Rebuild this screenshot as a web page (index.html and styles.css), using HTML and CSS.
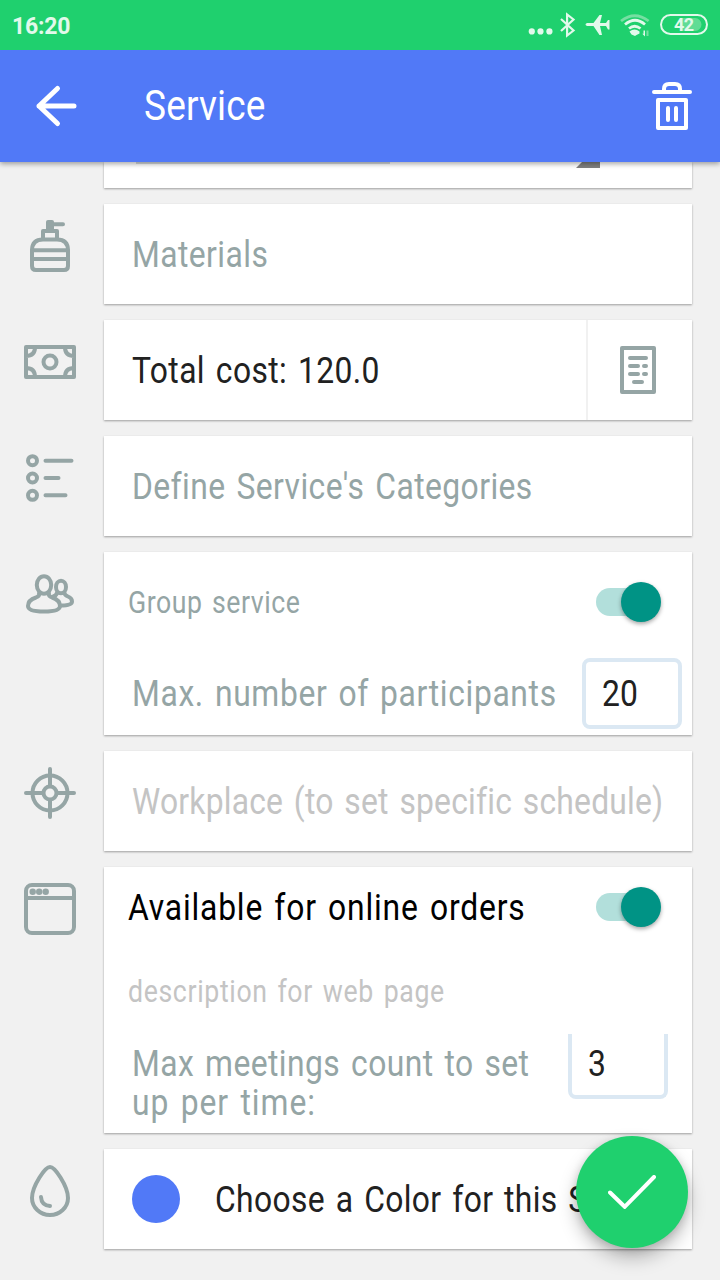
FILE: index.html
```html
<!DOCTYPE html>
<html lang="en">

<head>
    <meta charset="UTF-8" />
    <meta name="viewport" content="width=device-width, initial-scale=1.0" />
    <title>Service</title>
    <link rel="stylesheet" href="styles.css">
</head>

<body>
    <div class="status-bar">
        <span class="clock">16:20</span>
        <svg class="status-icons" width="182" height="30" viewBox="0 0 182 30">
            <g fill="#e2f9eb">
                <circle cx="3.8" cy="21.4" r="3.1" />
                <circle cx="12.5" cy="21.4" r="3.1" />
                <circle cx="21.4" cy="21.4" r="3.1" />
                <path d="M65.500 13L71.500 5H74L72 13H78L80 10H81.500V19.500H80L78 16H72L74 25H71.500L65.500 16H59Q56 14.500 59 13z" />
                <path d="M101.500 21.500q5-3.800 10 0v2l-3 1.500-1.500 1-3.500-1.500z" />
                <path d="M117 20.500v6l-2.700-2.700h1.200v-3.300z" />
            </g>
            <path d="M33 9l12.500 11.500-6.400 5V4.500l6.400 5L33 21" fill="none" stroke="#e2f9eb" stroke-width="2.200" />
            <path d="M101 18.500q5.600-4.500 11.500 0M97 14.500q10-8.500 20 0" fill="none" stroke="#e2f9eb" stroke-width="2.800" />
            <path d="M93 11q13.800-10.500 27.600 0" fill="none" stroke="#76dfa2" stroke-width="2.800" />
            <path d="M119.500 20.500v5.500" stroke="#76dfa2" stroke-width="2" />
            <path d="M152 8h15a6.500 6.500 0 0 1 0 13h-15z" fill="#61dc95" />
            <rect x="133" y="5" width="46" height="19" rx="9.500" fill="none" stroke="#e2f9eb" stroke-width="2" />
            <text class="battery" x="146" y="21">42</text>
        </svg>
    </div>

    <header class="app-bar">
        <svg class="back" width="44" height="44" viewBox="0 0 44 44">
            <path d="M40 22H5M23.500 4.500L5 22l18.500 17.500" fill="none" stroke="#fff" stroke-width="5" stroke-linecap="round" stroke-linejoin="round" />
        </svg>
        <h1 class="text title">Service</h1>
        <svg class="trash" width="40" height="48" viewBox="0 0 40 48">
            <g fill="none" stroke="#fff" stroke-width="4" stroke-linecap="round" stroke-linejoin="round">
                <path d="M2 10h36M12 10V7q0-5 5-5h6q5 0 5 5v3" />
                <path d="M6 18h28v28H6zM16 26v12M24 26v12" />
            </g>
        </svg>
    </header>

    <main class="list">
        <div class="row">
            <div class="side"></div>
            <div class="card card-cut">
                <div class="underline"></div>
                <div class="spinner"></div>
            </div>
        </div>

        <div class="row">
            <div class="side">
                <svg class="icon" viewBox="0 0 52 52">
                    <path d="M8 30.200h36M8 39h36M19 18v-7h14v7M28 4.300h11" />
                    <path d="M19 19.500h14q11 0 11 11V46q0 4-4 4H12q-4 0-4-4V30.500q0-11 11-11z" />
                    <path class="solid" d="M22 2q0-2 2-2h4q2 0 2 2v10h-8z" />
                </svg>
            </div>
            <div class="card line">
                <span class="text muted materials">Materials</span>
            </div>
        </div>

        <div class="row">
            <div class="side">
                <svg class="icon" viewBox="0 0 52 52">
                    <path d="M2 11h48v30H2zM11 11q0 9-9 9M41 11q0 9 9 9M2 32q9 0 9 9M50 32q-9 0-9 9" />
                    <circle cx="26" cy="26" r="6.500" />
                </svg>
            </div>
            <div class="card line">
                <span class="text total">Total cost: 120.0</span>
                <div class="receipt">
                    <svg width="36" height="48" viewBox="0 0 36 48">
                        <path d="M2 2h32v44H2zM10 12h16M10 20h8M24 20h2M10 28h8M24 28h2M14 36h8" />
                    </svg>
                </div>
            </div>
        </div>

        <div class="row">
            <div class="side">
                <svg class="icon" viewBox="0 0 52 52">
                    <circle cx="8.500" cy="8.700" r="4.500" />
                    <circle cx="8.500" cy="26" r="4.500" />
                    <circle cx="8.500" cy="43.300" r="4.500" />
                    <path d="M21.500 8.700h26M21.500 26h13M21.500 43.300h20" />
                </svg>
            </div>
            <div class="card line">
                <span class="text muted categories">Define Service's Categories</span>
            </div>
        </div>

        <div class="row">
            <div class="side">
                <svg class="icon" viewBox="0 0 52 52">
                    <ellipse cx="20" cy="17" rx="7.200" ry="8.700" />
                    <path d="M15 25.500q1 2.500-3 4Q4 32 4 38q0 5.500 16 5.500T36 38q0-6-8-8.500-4-1.500-3-4" />
                    <ellipse cx="37" cy="19" rx="5" ry="6.300" />
                    <path d="M33 25q-1 3-4 3.500M40.500 25q0 2 3.500 3.500 4 1.500 4 5Q48 37.500 36 37.500" />
                </svg>
            </div>
            <div class="card">
                <div class="group-row">
                    <span class="text small muted group">Group service</span>
                    <div class="toggle"></div>
                </div>
                <div class="count-row">
                    <span class="text muted participants">Max. number of participants</span>
                    <div class="field"><span class="text twenty">20</span></div>
                </div>
            </div>
        </div>

        <div class="row">
            <div class="side">
                <svg class="icon" viewBox="0 0 52 52">
                    <circle cx="26" cy="26" r="17.500" />
                    <circle cx="26" cy="26" r="6.500" />
                    <path d="M26 2v17M26 33v17M2 26h17M33 26h17" />
                </svg>
            </div>
            <div class="card line">
                <span class="text hint workplace">Workplace (to set specific schedule)</span>
            </div>
        </div>

        <div class="row">
            <div class="side">
                <svg class="icon" viewBox="0 0 52 52">
                    <rect x="2" y="2" width="48" height="48" rx="6" />
                    <path d="M2 15h48" />
                    <circle class="solid" cx="8.700" cy="8.700" r="3.200" />
                    <circle class="solid" cx="15.200" cy="8.700" r="3.200" />
                    <circle class="solid" cx="21.700" cy="8.700" r="3.200" />
                </svg>
            </div>
            <div class="card">
                <div class="online-row">
                    <span class="text strong online">Available for online orders</span>
                    <div class="toggle"></div>
                </div>
                <div class="desc-row">
                    <span class="text small hint description">description for web page</span>
                </div>
                <div class="meetings-row">
                    <div class="meetings muted">
                        <span class="text meetings-first">Max meetings count to set</span>
                        <span class="text meetings-second">up per time:</span>
                    </div>
                    <div class="field field-cut"><span class="text">3</span></div>
                </div>
            </div>
        </div>

        <div class="row">
            <div class="side">
                <svg class="icon" viewBox="0 0 52 52">
                    <path d="M26 2q4 0 10.500 10.500Q44 24.500 44 33q0 7-5.300 12T26 50t-12.700-5T8 33q0-8.500 7.500-20.500Q22 2 26 2z" />
                    <path d="M17 32q.5 8.500 9 9" />
                </svg>
            </div>
            <div class="card line">
                <div class="swatch"></div>
                <span class="text choose">Choose a Color for this Service</span>
            </div>
        </div>
    </main>

    <div class="fab">
        <svg width="48" height="34" viewBox="0 0 48 34">
            <path d="M2 17.500l14.700 14.300L46 2" fill="none" stroke="#fff" stroke-width="4" stroke-linecap="round" />
        </svg>
    </div>
</body>

</html>
```
FILE: styles.css
```css
* {
    box-sizing: border-box;
}

body {
    position: relative;
    width: 720px;
    height: 1280px;
    margin: 0;
    overflow: hidden;
    background-color: #f1f1f1;
    color: #212121;
    font-family: Roboto, "Noto Sans", sans-serif;
}

svg {
    display: block;
    flex: none;
}

.status-bar {
    position: relative;
    z-index: 2;
    display: flex;
    justify-content: space-between;
    height: 50px;
    padding: 10px 10px 0 12px;
    background-color: #1fd06e;
}

.clock {
    color: #e2f9eb;
    font-size: 23px;
    font-weight: 700;
    line-height: 34px;
    letter-spacing: -0.2px;
}

.battery {
    fill: #e2f9eb;
    font-size: 18px;
    font-weight: 700;
    letter-spacing: -0.5px;
}

.app-bar {
    position: relative;
    z-index: 1;
    display: flex;
    align-items: center;
    height: 112px;
    padding: 0 28px 0 34px;
    background-color: #5179f7;
    box-shadow: 0 2px 5px rgba(0, 0, 0, 0.35);
}

.trash {
    margin-left: auto;
}

/* condensed lettering */
.text {
    display: block;
    flex: none;
    font-size: 37px;
    font-weight: 400;
    white-space: nowrap;
    word-spacing: 3px;
    transform: scaleX(0.86);
    transform-origin: left center;
}

.small {
    font-size: 31px;
}

.muted {
    color: #95a5a5;
}

.hint {
    color: #c4c4c4;
}

.strong {
    color: #000;
}

.title {
    margin: 0 0 0 66px;
    padding-bottom: 2px;
    color: #fff;
    font-size: 43px;
    letter-spacing: 0.2px;
}

.materials {
    letter-spacing: 0.5px;
}

.categories {
    letter-spacing: 0.5px;
}

.group {
    letter-spacing: 0.6px;
}

.workplace {
    letter-spacing: 0.25px;
}

.online {
    letter-spacing: 0.95px;
}

.description {
    letter-spacing: 0.75px;
}

.meetings-first {
    letter-spacing: 0.5px;
}

.meetings-second {
    letter-spacing: 1.1px;
}

.choose {
    letter-spacing: 0.4px;
}

.list {
    display: flex;
    flex-direction: column;
    gap: 16px;
}

.row {
    display: flex;
}

.side {
    width: 104px;
    padding: 16px 0 0 24px;
}

.icon {
    width: 52px;
    height: 52px;
    overflow: visible;
}

.icon,
.receipt svg {
    fill: none;
    stroke: #95a5a5;
    stroke-width: 4;
    stroke-linecap: round;
    stroke-linejoin: round;
}

.icon .solid {
    fill: #95a5a5;
    stroke: none;
}

.card {
    width: 588px;
    background-color: #fff;
    box-shadow: 0 1px 2px rgba(0, 0, 0, 0.35);
}

.line {
    display: flex;
    align-items: center;
    height: 100px;
    padding-left: 28px;
}

.card-cut {
    display: flex;
    align-items: flex-start;
    height: 26px;
    padding-left: 32px;
}

.underline {
    width: 254px;
    height: 2px;
    background-color: #d5dade;
}

.spinner {
    width: 24px;
    height: 6px;
    margin-left: 186px;
    background-color: #808080;
    clip-path: polygon(6px 0, 100% 0, 100% 100%, 0 100%);
}

.receipt {
    display: flex;
    align-items: center;
    justify-content: center;
    width: 106px;
    height: 100px;
    margin-left: auto;
    padding-right: 4px;
    border-left: 2px solid #f1f1f1;
}

.total {
    width: 250px;
    letter-spacing: 0.45px;
}

.group-row,
.online-row {
    display: flex;
    align-items: center;
    justify-content: space-between;
    height: 100px;
    padding: 0 31px 0 24px;
}

.online-row {
    height: 80px;
}

.toggle {
    display: flex;
    align-items: center;
    justify-content: flex-end;
    width: 65px;
    height: 28px;
    border-radius: 14px;
    background: linear-gradient(to right, #b2dfdb 56px, transparent 56px);
}

.toggle::after {
    content: "";
    width: 40px;
    height: 40px;
    flex: none;
    border-radius: 50%;
    background-color: #009385;
    box-shadow: 0 2px 4px rgba(0, 0, 0, 0.35);
}

.count-row {
    display: flex;
    align-items: center;
    justify-content: space-between;
    height: 83px;
    padding: 0 10px 0 28px;
}

.participants {
    width: 440px;
    letter-spacing: 0.75px;
}

.field {
    display: flex;
    align-items: center;
    flex: none;
    width: 100px;
    height: 71px;
    padding: 0 0 1px 16px;
    border: 4px solid #dbe8f3;
    border-radius: 8px;
}

.desc-row {
    display: flex;
    align-items: center;
    height: 87px;
    padding: 1px 0 0 24px;
}

.meetings-row {
    display: flex;
    justify-content: space-between;
    height: 99px;
    padding: 0 24px 0 28px;
}

.meetings {
    width: 410px;
    padding-top: 11px;
    line-height: 38.5px;
}

.field-cut {
    height: 65px;
    padding-bottom: 2px;
    border-top: 0;
    border-radius: 0 0 8px 8px;
}

.swatch {
    flex: none;
    width: 48px;
    height: 48px;
    margin-right: 35px;
    border-radius: 50%;
    background-color: #5179f7;
}

.fab {
    position: absolute;
    top: 1136px;
    left: 576px;
    display: flex;
    align-items: center;
    justify-content: center;
    width: 112px;
    height: 112px;
    border-radius: 50%;
    background-color: #1fd06e;
    box-shadow: 0 10px 18px rgba(0, 0, 0, 0.25), 0 2px 8px rgba(0, 0, 0, 0.15);
}
```
